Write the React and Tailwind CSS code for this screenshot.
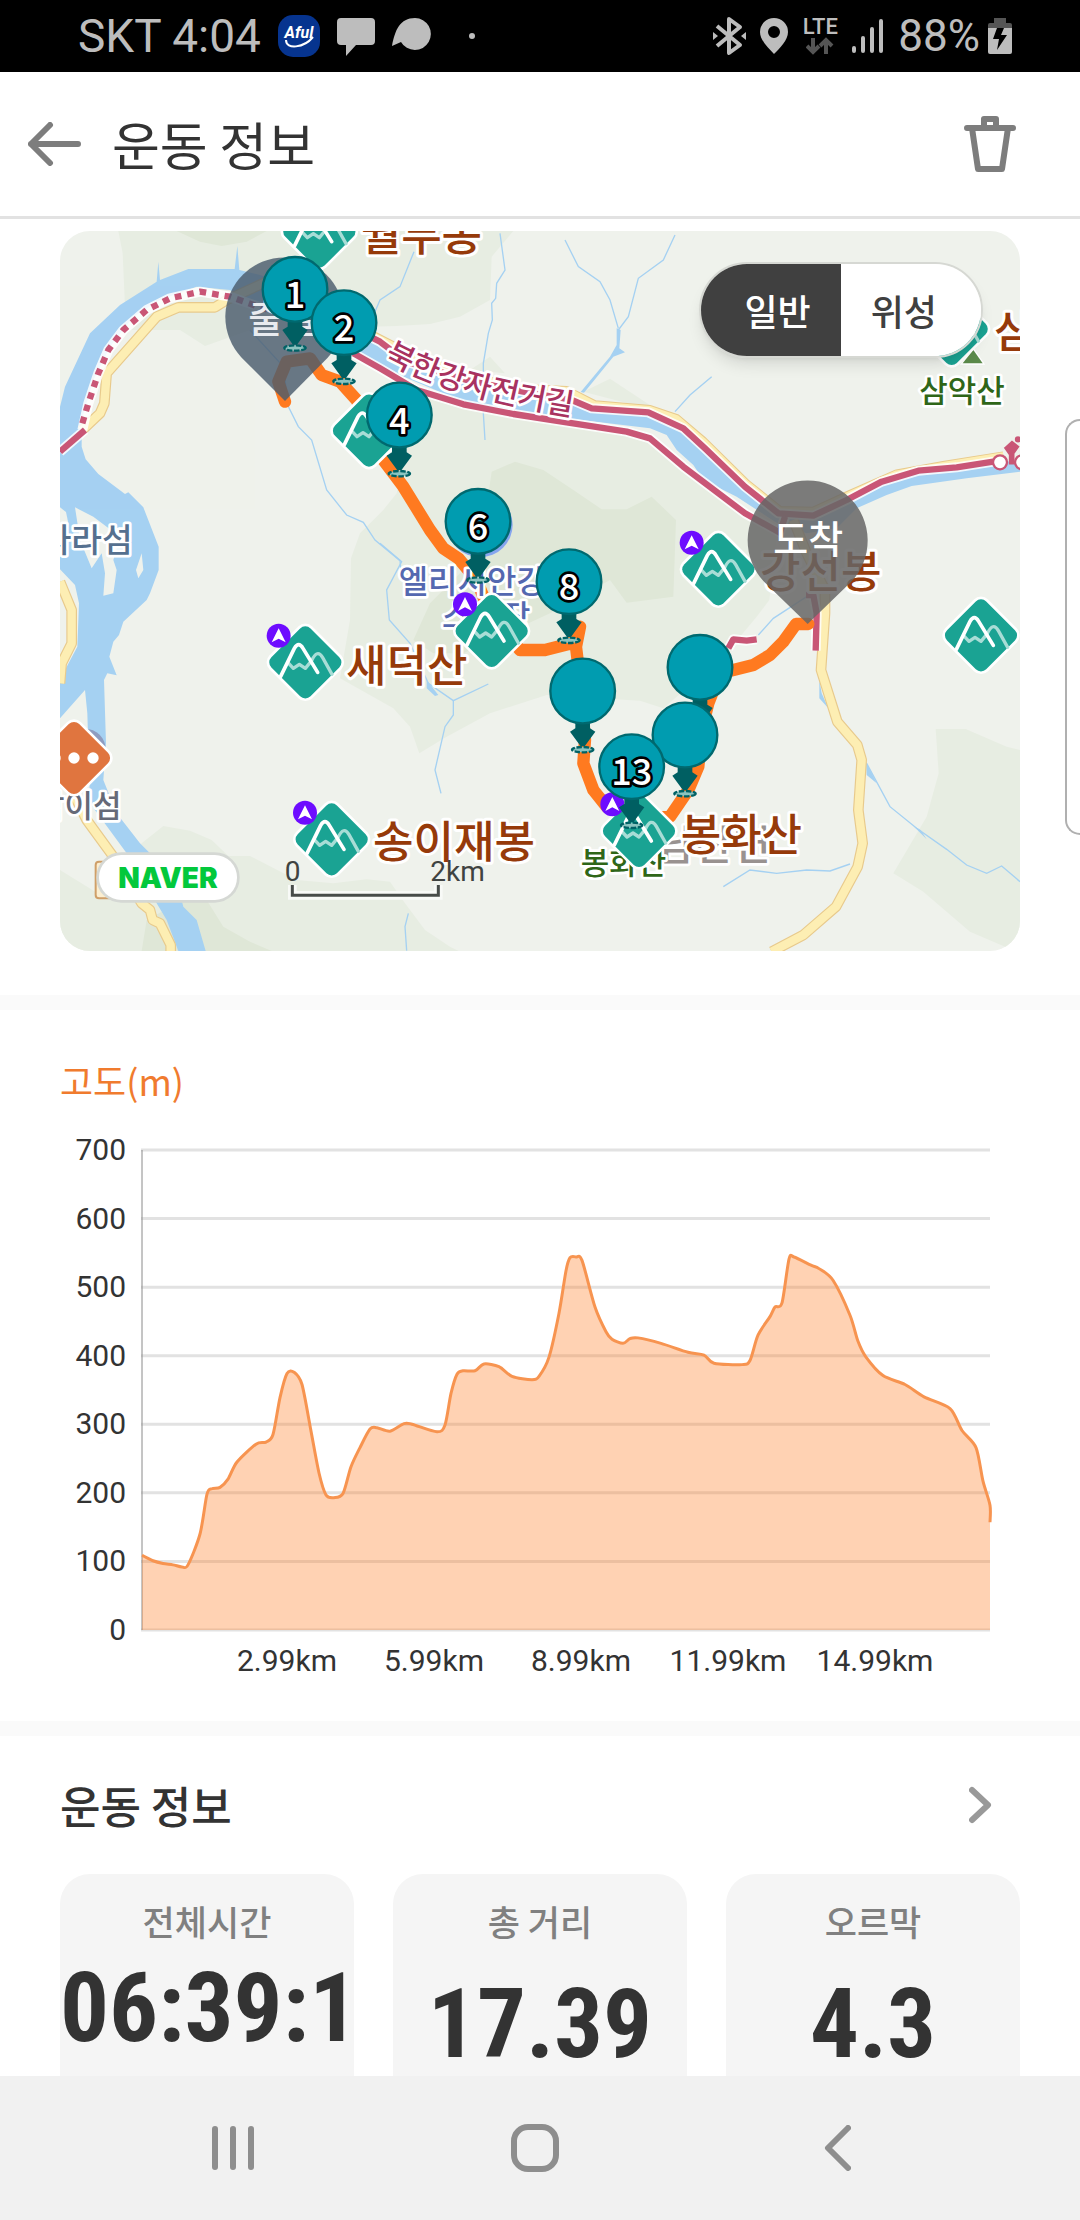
import React, { useState } from 'react';

const markers = [
  { x: 735, y: 208, label: '1' },
  { x: 882, y: 308, label: '2' },
  { x: 1048, y: 585, label: '4' },
  { x: 1284, y: 904, label: '6' },
  { x: 1557, y: 1085, label: '8' },
  { x: 1598, y: 1413, label: '' },
  { x: 1950, y: 1342, label: '' },
  { x: 1905, y: 1545, label: '' },
  { x: 1745, y: 1640, label: '13' },
];

const peaks = [
  { x: 808, y: 35 },
  { x: 957, y: 632 },
  { x: 2705, y: 327 },
  { x: 2793, y: 1246 },
  { x: 766, y: 1327, badge: true },
  { x: 845, y: 1858, badge: true },
  { x: 1325, y: 1233, badge: true },
  { x: 1767, y: 1833, badge: true },
  { x: 2005, y: 1048, badge: true },
];

const placeNames = [
  { x: -28, y: 997, size: 100, color: '#55708f', text: '자라섬' },
  { x: -42, y: 1790, size: 93, color: '#666a78', text: '남이섬' },
  { x: 1046, y: 1120, size: 96, color: '#5468b0', text: '엘리시안강촌' },
  { x: 1176, y: 1225, size: 96, color: '#5468b0', text: '스키장' },
  { x: 1820, y: 1921, size: 124, color: '#999290', text: '남산면' },
  { x: 1592, y: 1963, size: 93, color: '#2f6618', text: '봉화산' },
  { x: 2608, y: 547, size: 93, color: '#2f6618', text: '삼악산' },
];

const peakNames = [
  { x: 932, y: 92, text: '월두봉' },
  { x: 888, y: 1385, text: '새덕산' },
  { x: 969, y: 1915, text: '송이재봉' },
  { x: 1892, y: 1892, text: '봉화산' },
  { x: 2130, y: 1105, text: '강선봉' },
  { x: 2832, y: 385, text: '삼악산' },
];

const streams = [
  'M600 330L700 440L715 560L745 620L785 660L830 810L890 885L940 907L975 960L1050 1022L1056 1080',
  'M975 275L990 240L1050 200L1092 95',
  'M1350 40L1365 150L1340 190L1337 235L1325 250L1327 300L1315 340L1300 430L1300 580L1305 660',
  'M1545 60L1585 140L1650 185L1680 240L1705 325',
  'M1875 45L1840 120L1765 175L1735 290L1705 330',
  'M1985 470L1920 525L1875 575',
  'M990 970L1055 1025L1010 1110L1018 1200L1080 1270L1135 1390L1210 1442L1315 1392',
  'M1210 1442L1210 1485L1185 1520L1155 1650L1173 1720',
  'M2125 1245L2170 1195L2270 1130',
  'M2450 1630L2520 1760L2600 1825L2690 1888L2750 1935L2810 1960L2855 1938L2910 1985',
  'M2020 2000L2100 1950L2180 1960L2270 1950L2340 1953L2400 1932',
  'M1075 2080L1065 2120L1070 2192',
];

// [x on the plot, elevation in metres]
const elevation = [
  [0, 109], [11, 101], [21, 97], [31, 95], [40, 92], [46, 95], [58, 140], [65, 198], [70, 206], [78, 208],
  [86, 220], [95, 245], [114, 271], [124, 274], [131, 285], [138, 339], [145, 374], [152, 376], [160, 358],
  [169, 290], [177, 229], [184, 197], [192, 193], [201, 199], [209, 238], [218, 266], [228, 293], [235, 295],
  [248, 290], [262, 301], [270, 300], [295, 289], [303, 299], [309, 345], [315, 373], [321, 378], [333, 378],
  [342, 388], [357, 384], [370, 370], [390, 365], [397, 370], [407, 398], [417, 462], [424, 524], [428, 543],
  [434, 544], [440, 539], [453, 471], [464, 435], [470, 424], [481, 418], [488, 425], [496, 426], [519, 418],
  [546, 405], [562, 401], [572, 389], [600, 387], [608, 393], [616, 430], [628, 457], [633, 471], [640, 477],
  [647, 541], [652, 544], [669, 532], [677, 527], [691, 510], [708, 459], [716, 421], [724, 398], [741, 371],
  [763, 358], [782, 340], [808, 323], [820, 291], [834, 266], [841, 217], [848, 182], [848, 157],
];

const steps = [700, 600, 500, 400, 300, 200, 100, 0];
const distances = ['2.99km', '5.99km', '8.99km', '11.99km', '14.99km'];

const yOf = (m) => 500 - (m * 480) / 700;

const curve = () => {
  const pts = elevation.map(([x, m]) => [x + 82, yOf(m)]);
  let d = `M${pts[0][0]} ${pts[0][1]}`;
  for (let i = 0; i < pts.length - 1; i++) {
    const a = pts[Math.max(i - 1, 0)];
    const b = pts[i];
    const c = pts[i + 1];
    const e = pts[Math.min(i + 2, pts.length - 1)];
    d += `C${b[0] + (c[0] - a[0]) / 7} ${b[1] + (c[1] - a[1]) / 7} ${c[0] - (e[0] - b[0]) / 7} ${c[1] - (e[1] - b[1]) / 7} ${c[0]} ${c[1]}`;
  }
  return d;
};

const Peak = ({ x, y, badge }) => (
  <g transform={`translate(${x} ${y})`}>
    <rect x="-83" y="-83" width="166" height="166" rx="22" transform="rotate(45)" fill="#1aa393" stroke="#fff" strokeWidth="16" paintOrder="stroke" />
    <g fill="none" strokeLinecap="round" strokeLinejoin="round">
      <path d="M-50 3L-36 18L-18 6L0 18L19 -5Q36 -42 52 -14L80 36" stroke="#a8ddd6" strokeWidth="10" />
      <path d="M-74 42L-33 -42Q-20 -64 -7 -42L37 30" stroke="#fff" strokeWidth="11" />
    </g>
    {badge && (
      <g transform="translate(-80 -80)">
        <circle r="36" fill="#6d0cff" />
        <path d="M0 -22L21 20L0 9L-21 20Z" fill="#fff" />
      </g>
    )}
  </g>
);

const Marker = ({ x, y, label }) => (
  <g transform={`translate(${x} ${y})`}>
    <ellipse cy="176" rx="32" ry="8" fill="#8cc4c0" stroke="#006266" strokeWidth="7" strokeDasharray="16 5" />
    <path d="M-22 92H22V112L38 122L6 166H-6L-38 122L-22 112Z" fill="#005f62" />
    <circle r="97" fill="#009cb0" stroke="#00696f" strokeWidth="7" />
    {label && (
      <text y="56" textAnchor="middle" fontSize="108" fontWeight="500" fill="#fff" stroke="#000" strokeWidth="16" strokeLinejoin="round" paintOrder="stroke">
        {label}
      </text>
    )}
  </g>
);

const TrackMap = () => (
  <svg viewBox="30 33 2880 2160" className="block w-full h-auto font-['Noto_Sans_CJK_KR',sans-serif]" role="img" aria-label="운동 경로">
    <rect x="30" y="33" width="2880" height="2160" fill="#eff2ec" />

    {/* forest */}
    <g fill="#e7ede2">
      <path d="M205 33L218 100L228 330H390L465 378L600 330L1040 318L1140 312L1230 290L1320 240L1325 110L1390 33Z" />
      <path d="M1040 820L1100 500L1500 600L1790 650L2180 950L2158 1140L2120 1190L2020 1310L1840 1465L1770 1442L1490 1425L1320 1480L1190 1550L1108 1600L1080 1520L1030 1465L870 1375L900 1200L903 1015L930 940L1000 870Z" />
      <path d="M1260 450L1320 410L1365 460ZM1600 515L1680 476L1830 575Z" />
      <path d="M2657 1527H2747L2870 1580L2910 1590V2192L2865 2180L2760 2135L2620 2015L2530 1960L2630 1790L2666 1660Z" />
      <path d="M30 1950L160 2030L275 1870L340 1818L420 1832L485 1860L535 1908H600L740 1980L850 1990L950 1978L1020 1985L1065 2050L1125 2130L1200 2180L1230 2195H30Z" />
    </g>
    <g fill="#dfe7d7">
      <path d="M380 33L450 65L515 78L590 65L650 33Z" />
      <path d="M1325 755L1395 725L1480 750L1570 810L1655 868H1730L1805 830L1878 900L1870 1130L1730 1148L1680 1080L1500 1180L1240 1300L1150 1300L1090 1260L1140 1150L1290 1000Z" />
      <path d="M275 2193L290 2100L400 2040H470L520 2120L600 2165L665 2193Z" />
    </g>

    {/* river */}
    <g fill="#a5d1f2">
      <path d="M30 560L45 500L120 340L210 255L320 185L325 125L330 180L415 147H554L562 78L568 150L630 165L700 190L860 280L540 210L440 200L330 240L250 290L180 380L130 480L95 600V680L107 718L145 762L225 822L235 817L280 862L326 980V1050L300 1120L290 1140L220 1205L207 1245L190 1265L178 1310L200 1366L172 1360L162 1380L168 1570L160 1680L200 1780L270 1870L380 1980L400 2060L440 2100L467 2193H385L350 2100L230 1900L120 1750L112 1480L105 1410L30 1495Z" />
      <path d="M550 150L700 190L990 365L1250 480L1565 545L1795 585L1900 640L2010 740L2185 885L2290 895L2390 850L2495 790L2605 757L2720 745L2910 720V755L2750 775L2585 798L2510 825L2420 865L2360 925L2270 940L2190 915L2060 830L1960 780L1930 735L1880 690L1850 645L1800 625L1550 595L1240 545L990 440L850 370L640 270L540 210Z" />
      <path d="M1700 325L1712 330L1708 385L1725 397L1690 410L1602 518L1592 516L1680 410L1700 375Z" />
      <path d="M1130 1380L1165 1425L1155 1428L1130 1405ZM2308 1380L2315 1420L2335 1465L2308 1435ZM2448 1625L2480 1690L2450 1665ZM2590 1818L2612 1830L2630 1858Z" />
    </g>
    <g fill="#eff2ec">
      <path d="M30 862L48 876L55 910L50 1000L30 1010Z" />
      <path d="M75 862L130 890L210 950L190 1020L200 1050L190 1120L160 1127L165 1060L155 1000L125 1045L90 960Z" />
      <path d="M275 1000L280 1050L265 1075L258 1050ZM30 1048L75 1095L87 1150L82 1280L45 1350L30 1390Z" />
    </g>
    <g fill="none" stroke="#a5d1f2" strokeWidth="4">
      {streams.map((d) => (
        <path key={d} d={d} />
      ))}
    </g>

    {/* roads */}
    {[['#e8ca8c', 32], ['#fdeeb3', 25]].map(([color, width]) => (
      <g key={color} fill="none" stroke={color} strokeWidth={width} strokeLinejoin="round">
        <path d="M95 632L150 580L163 550L170 460L320 290L385 262H495L530 240L650 185" />
        <path d="M30 1085L65 1170V1270L35 1330L30 1390" />
        <path d="M75 1730L110 1800L190 1910L275 2050L300 2070L308 2100L330 2110L362 2175V2195" />
        <path d="M2230 900L2270 1000L2325 1110V1180L2313 1350L2362 1505L2422 1575L2435 1620L2425 1770L2438 1870L2423 1940L2358 2060L2260 2145L2165 2195" />
      </g>
    ))}
    {[['#e8ca8c', 24], ['#fdeeb3', 18]].map(([color, width]) => (
      <path
        key={color}
        d="M960 340L1100 412L1250 464L1400 503L1550 510L1635 553L1800 567L1880 594L1960 662L2090 790L2190 870L2290 872L2400 822L2540 760L2680 735L2860 706"
        fill="none"
        stroke={color}
        strokeWidth={width}
        strokeLinejoin="round"
      />
    ))}
    <path d="M137 1935Q137 1925 147 1925H260V2035H147Q137 2035 137 2025Z" fill="#fbeed0" stroke="#cf9f68" strokeWidth="6" />

    {/* bicycle path */}
    <g fill="none" stroke="#fff" strokeWidth="30" strokeLinejoin="round" opacity="0.85">
      <path d="M97 630L115 550L145 460L175 390L220 330L290 270L360 235L450 215L540 230L640 265L860 330" />
      <path d="M30 695L105 630" />
      <path d="M860 300L990 365L1070 425L1250 480L1420 515L1565 540L1625 565L1795 577L1900 625L1965 685L2085 800L2185 880L2290 887L2390 840L2495 785L2605 752L2720 742L2830 725" />
      <path d="M910 400L990 445L1100 510L1240 553L1390 582L1550 607L1730 635L1800 655L1900 740L2085 880L2190 938L2205 890" />
      <path d="M2035 1285L2050 1258L2090 1262L2120 1258M2268 1125H2290L2300 1180L2297 1292" />
    </g>
    <g fill="none" stroke="#c95676" strokeWidth="19" strokeLinejoin="round">
      <path d="M97 610L115 550L145 460L175 390L220 330L290 270L360 235L450 215L540 230L640 265L860 330" strokeDasharray="20 18" />
      <path d="M30 695L105 630" />
      <path d="M860 300L990 365L1070 425L1250 480L1420 515L1565 540L1625 565L1795 577L1900 625L1965 685L2085 800L2185 880L2290 887L2390 840L2495 785L2605 752L2720 742L2830 725" />
      <path d="M910 400L990 445L1100 510L1240 553L1390 582L1550 607L1730 635L1800 655L1900 740L2085 880L2190 938L2205 890" />
      <path d="M2035 1285L2050 1258L2090 1262L2120 1258M2268 1125H2290L2300 1180L2297 1292" />
    </g>
    <g stroke="#c95676" strokeWidth="7" fill="#fff">
      <circle cx="2850" cy="727" r="21" />
      <circle cx="2916" cy="727" r="21" />
      <circle cx="2904" cy="658" r="6" fill="#c95676" />
      <path d="M2866 684L2886 666L2904 680L2890 700V730H2880V704Z" fill="#c95676" />
    </g>

    {/* recorded track */}
    <path
      d="M705 545L685 485L710 425L780 415L815 465L870 485L920 540L1000 720L1060 800L1140 930L1180 985L1225 1015L1280 1080L1320 1180L1410 1290H1485L1565 1270L1590 1220L1578 1280L1590 1380L1605 1560L1600 1630L1630 1710L1670 1760L1750 1800L1860 1790L1915 1710L1945 1640L1955 1530L1975 1450L2010 1360L2050 1350L2110 1335L2160 1305L2200 1265L2238 1212H2275"
      fill="none"
      stroke="#ff7a20"
      strokeWidth="37"
      strokeLinecap="round"
      strokeLinejoin="round"
    />

    <circle cx="1290" cy="914" r="98" fill="#86a5ef" />
    <circle cx="105" cy="1588" r="62" fill="#8f9cc0" />
    <path d="M2770 390L2738 430H2798Z" fill="#5b8a4a" stroke="#fff" strokeWidth="8" paintOrder="stroke" />

    <g fontWeight="500" stroke="#fff" strokeWidth="16" strokeLinejoin="round" paintOrder="stroke">
      {placeNames.map((p) => (
        <text key={p.text + p.x} x={p.x} y={p.y} fontSize={p.size} fill={p.color}>
          {p.text}
        </text>
      ))}
      <path id="bike-road" d="M1000 420C1150 500 1300 545 1580 590" fill="none" stroke="none" />
      <text fontSize="92" fill="#a83260">
        <textPath href="#bike-road">북한강자전거길</textPath>
      </text>
    </g>

    {peaks.map((p) => (
      <Peak key={p.x} {...p} />
    ))}
    <g transform="translate(72 1614)">
      <rect x="-83" y="-83" width="166" height="166" rx="22" transform="rotate(45)" fill="#e0753f" stroke="#fff" strokeWidth="16" paintOrder="stroke" />
      <g fill="#fff">
        <circle cx="-57" r="17" />
        <circle r="17" />
        <circle cx="57" r="17" />
      </g>
    </g>

    <g fontSize="132" fontWeight="500" fill="#963a0a" stroke="#fff" strokeWidth="18" strokeLinejoin="round" paintOrder="stroke">
      {peakNames.map((p) => (
        <text key={p.text + p.x} x={p.x} y={p.y}>
          {p.text}
        </text>
      ))}
    </g>

    {/* start and finish */}
    <g fontSize="114" fontWeight="500" textAnchor="middle">
      <path d="M705 543L575 413A178 178 0 1 1 833 413Z" fill="#4b5b6d" opacity="0.82" />
      <text x="700" y="335" fill="#e8ebef">출발</text>
      <path d="M2273 1212L2143 1086A180 180 0 1 1 2403 1086Z" fill="#666" opacity="0.85" />
      <text x="2275" y="1000" fill="#fff">도착</text>
    </g>

    {markers.map((m) => (
      <Marker key={m.x} {...m} />
    ))}

    {/* provider mark and scale */}
    <rect x="147" y="1905" width="414" height="135" rx="67" fill="#fff" stroke="#d5d8d4" strokeWidth="16" paintOrder="stroke" />
    <text x="354" y="2003" textAnchor="middle" fontSize="84" fontWeight="900" fill="#03c83c" className="font-[Inter,sans-serif]">
      NAVER
    </text>
    <path d="M727 1995V2026H1165V1995" fill="none" stroke="#f8faf7" strokeWidth="26" />
    <path d="M727 1995V2026H1165V1995" fill="none" stroke="#474c49" strokeWidth="9" />
    <g fontSize="84" fill="#3f4341" className="font-[Roboto,sans-serif]">
      <text x="704" y="1984">0</text>
      <text x="1141" y="1984">2km</text>
    </g>
  </svg>
);

const ElevationChart = () => {
  const line = curve();
  return (
    <svg viewBox="0 0 960 560" className="block w-full h-auto font-[Roboto,sans-serif]" role="img" aria-label="고도 그래프">
      <g fontSize="30" fill="#333">
        {steps.map((s) => (
          <g key={s}>
            <path d={`M81 ${yOf(s)}H930`} stroke="#e2e2e2" strokeWidth="3" />
            <text x="66" y={yOf(s) + 10} textAnchor="end">
              {s}
            </text>
          </g>
        ))}
        {distances.map((d, i) => (
          <text key={d} x={227 + i * 147} y="541" textAnchor="middle">
            {d}
          </text>
        ))}
      </g>
      <path d="M82 20V500" stroke="#8a8a8a" strokeWidth="1" />
      <path d={`${line}V500H82Z`} fill="#ff7a20" opacity="0.34" />
      <path d={line} fill="none" stroke="#f79450" strokeWidth="3" strokeLinejoin="round" />
    </svg>
  );
};

const StatusBar = () => (
  <div className="h-[72px] shrink-0 bg-black text-[#bdbdbd] pl-[78px] pr-[68px] flex items-center justify-between font-[Roboto,sans-serif] leading-[72px]">
    <div className="flex items-center gap-[17px]">
      <span className="text-[46px]">SKT 4:04</span>
      <svg width="42" height="42" viewBox="0 0 42 42">
        <rect width="42" height="42" rx="15" fill="#06348f" />
        <text x="21" y="23" textAnchor="middle" fontSize="16" fontStyle="italic" fontWeight="700" fill="#fff">Aful</text>
        <path d="M8 25C8 35 26 33 35 22" fill="none" stroke="#fff" strokeWidth="2" />
      </svg>
      <svg width="38" height="42" viewBox="0 0 38 42" fill="currentColor">
        <path d="M4 3H34Q38 3 38 7V26Q38 30 34 30H19L9 41V30H4Q0 30 0 26V7Q0 3 4 3Z" />
      </svg>
      <svg width="40" height="42" viewBox="0 0 40 42" fill="currentColor">
        <path d="M23 3A16 16 0 1 1 9 27L0 31C3 15 8 3 23 3Z" />
      </svg>
      <span className="w-[6px] h-[6px] rounded-full bg-[#bdbdbd] ml-5"></span>
    </div>
    <div className="flex items-center gap-[14px]">
      <svg width="33" height="40" viewBox="0 0 33 40" fill="none" stroke="currentColor" strokeWidth="4" strokeLinejoin="round">
        <path d="M4 10L27 29L16 37V3L27 11L4 30" />
        <path d="M0 16L5 20L0 24ZM33 16L28 20L33 24Z" fill="currentColor" stroke="none" />
      </svg>
      <svg width="28" height="38" viewBox="0 0 28 38" fill="currentColor">
        <path fillRule="evenodd" d="M14 1A14 14 0 0 1 28 15C28 23 20 31 14 37C8 31 0 23 0 15A14 14 0 0 1 14 1ZM14 9A6 6 0 1 0 14 21A6 6 0 1 0 14 9Z" />
      </svg>
      <div className="w-9 flex flex-col items-center">
        <span className="text-[22px] leading-5 font-medium">LTE</span>
        <svg width="28" height="18" viewBox="0 0 28 18" fill="none" stroke="#555" strokeWidth="4">
          <path d="M7 1V14M1 9L7 15L13 9M20 17V4M14 9L20 3L26 9" />
        </svg>
      </div>
      <svg width="32" height="36" viewBox="0 0 32 36" stroke="currentColor" strokeWidth="4" strokeLinecap="round">
        <path d="M2 30V33M11 20V33M20 11V33M29 3V33" />
      </svg>
      <div className="flex items-center gap-2">
        <span className="text-[44px]">88%</span>
        <svg width="24" height="38" viewBox="0 0 24 38">
          <path d="M6 1H18V6H22Q24 6 24 8V11H0V8Q0 6 2 6H6Z" fill="#555" />
          <path d="M0 11H24V35Q24 37 22 37H2Q0 37 0 35Z" fill="#bdbdbd" />
          <path d="M9 11H16L13 18H19L9 33L11 22H5Z" fill="#000" />
        </svg>
      </div>
    </div>
  </div>
);

const stats = [
  { label: '전체시간', value: '06:39:1' },
  { label: '총 거리', value: '17.39', low: true },
  { label: '오르막', value: '4.3', low: true },
];

const App = () => {
  const [mapType, setMapType] = useState('normal');

  return (
    <div className="relative h-screen overflow-hidden flex flex-col bg-white text-[#333] font-['Noto_Sans_CJK_KR',sans-serif]">
      <StatusBar />

      <header className="h-[147px] shrink-0 border-b-3 border-[#e2e2e2] pl-7 pr-16 flex items-center">
        <button type="button" aria-label="뒤로">
          <svg width="54" height="44" viewBox="0 0 54 44" fill="none" stroke="#7d7d7d" strokeWidth="6" strokeLinecap="round" strokeLinejoin="round">
            <path d="M22 3L3 22L22 41M3 22H50" />
          </svg>
        </button>
        <h1 className="ml-[30px] text-[52px] leading-[72px]">운동 정보</h1>
        <button type="button" aria-label="삭제" className="ml-auto">
          <svg width="52" height="58" viewBox="0 0 52 58" fill="none" stroke="#7d7d7d" strokeWidth="6" strokeLinecap="round" strokeLinejoin="round">
            <path d="M3 13H49M8 13L14 54H38L44 13M20 13V4H32V13" />
          </svg>
        </button>
      </header>

      <main className="flex-1 min-h-0 overflow-hidden">
        <section className="px-[60px] pt-3 pb-11">
          <div className="relative rounded-[30px] overflow-hidden">
            <TrackMap />
            <div className="absolute top-[31px] right-[37px] flex rounded-full overflow-hidden border-2 border-[#d6d8d3] shadow-lg text-[36px] leading-[92px] font-medium">
              <button
                type="button"
                onClick={() => setMapType('normal')}
                className={`pl-11 pr-[30px] ${mapType === 'normal' ? 'bg-[#404040] text-white' : 'bg-white text-[#404040]'}`}
              >
                일반
              </button>
              <button
                type="button"
                onClick={() => setMapType('satellite')}
                className={`pl-[30px] pr-11 ${mapType === 'satellite' ? 'bg-[#404040] text-white' : 'bg-white text-[#404040]'}`}
              >
                위성
              </button>
            </div>
          </div>
        </section>

        <section className="border-t-15 border-[#fafafa] px-[60px] pt-11 pb-[31px]">
          <h2 className="text-[36px] leading-[52px] text-[#f07b2e] mb-6">고도(m)</h2>
          <ElevationChart />
        </section>

        <section className="border-t-15 border-[#fafafa] px-[60px] pt-9">
          <div className="flex items-center justify-between pr-7">
            <h2 className="text-[44px] leading-[66px] font-medium">운동 정보</h2>
            <button type="button" aria-label="더보기">
              <svg width="23" height="38" viewBox="0 0 23 38" fill="none" stroke="#999" strokeWidth="6" strokeLinecap="round" strokeLinejoin="round">
                <path d="M3 4L19 19L3 34" />
              </svg>
            </button>
          </div>
          <div className="grid grid-cols-3 gap-[39px] mt-9">
            {stats.map((s) => (
              <div key={s.label} className="rounded-t-[30px] bg-[#f5f5f5] h-[260px] pt-6 text-center overflow-hidden">
                <p className="text-[35px] leading-[46px] font-medium text-[#808080]">{s.label}</p>
                <p className={`text-[97px] leading-[120px] font-bold font-['Roboto_Condensed',Roboto,sans-serif] ${s.low ? 'mt-5' : 'mt-1'}`}>
                  {s.value}
                </p>
              </div>
            ))}
          </div>
        </section>
      </main>

      {/* edge panel handle */}
      <div className="absolute right-0 top-[419px] w-[15px] h-[416px] bg-white border-2 border-r-0 border-[#b0b0b0] rounded-l-[18px]"></div>

      <nav className="h-36 shrink-0 bg-[#f1f1f1] pl-[201px] pr-[211px] flex items-center justify-between">
        <button type="button" aria-label="최근 앱" className="w-16 flex justify-center">
          <svg width="42" height="46" viewBox="0 0 42 46" stroke="#8e8e8e" strokeWidth="6" strokeLinecap="round">
            <path d="M3 4V42M21 4V42M39 4V42" />
          </svg>
        </button>
        <button type="button" aria-label="홈" className="w-16 flex justify-center">
          <svg width="48" height="48" viewBox="0 0 48 48" fill="none" stroke="#8e8e8e" strokeWidth="6">
            <rect x="3" y="3" width="42" height="42" rx="14" />
          </svg>
        </button>
        <button type="button" aria-label="이전" className="w-16 flex justify-center">
          <svg width="27" height="46" viewBox="0 0 27 46" fill="none" stroke="#8e8e8e" strokeWidth="6" strokeLinecap="round" strokeLinejoin="round">
            <path d="M24 3L4 23L24 43" />
          </svg>
        </button>
      </nav>
    </div>
  );
};

export default App;
